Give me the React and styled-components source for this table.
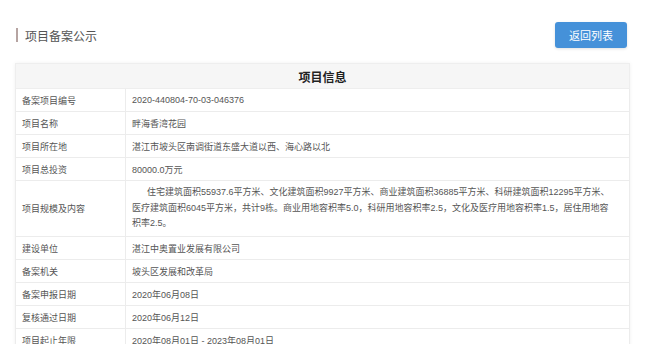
import styled, { createGlobalStyle } from "styled-components";

const GlobalStyle = createGlobalStyle`
  html, body {
    margin: 0;
    padding: 0;
    background: #fff;
  }
  body {
    font-family: "Liberation Sans", "Noto Sans CJK SC", sans-serif;
    color: #555;
  }
`;

const Page = styled.div`
  width: 651px;
  height: 344px;
  overflow: hidden;
  padding: 22px 21px 0 15px;
  box-sizing: border-box;
`;

const TopBar = styled.div`
  display: flex;
  align-items: center;
  justify-content: space-between;
  height: 26px;
  margin-bottom: 15px;
`;

const Heading = styled.h2`
  margin: 0;
  display: flex;
  align-items: center;
  gap: 7px;
  font-size: 12px;
  font-weight: normal;
  color: #555;

  &::before {
    content: "";
    display: block;
    width: 2px;
    height: 14px;
    margin-left: 1px;
    background: #b6a4a2;
  }
`;

const BackButton = styled.a`
  display: flex;
  align-items: center;
  justify-content: center;
  width: 72px;
  height: 26px;
  margin-right: 3px;
  border-radius: 3px;
  background: #4591d9;
  color: #fff;
  font-size: 11px;
  text-decoration: none;
  box-shadow: 0 1px 3px rgba(0, 0, 0, 0.12);
`;

const Table = styled.table`
  width: 615px;
  border-collapse: collapse;
  table-layout: fixed;
  font-size: 9px;
  box-shadow: 0 0 4px rgba(0, 0, 0, 0.06);
`;

const Col = styled.col`
  width: ${(p) => (p.$w ? `${p.$w}px` : "auto")};
`;

const HeadCell = styled.th`
  height: 24px;
  padding: 0;
  background: #f6f6f6;
  border: 1px solid #eeeeee;
  font-size: 12px;
  font-weight: bold;
  color: #222;
  text-align: center;
`;

const Label = styled.td`
  height: ${(p) => p.$h || 23}px;
  padding: 0 0 0 6px;
  box-sizing: border-box;
  border: 1px solid #ececec;
  color: #555;
  vertical-align: middle;
`;

const Value = styled.td`
  padding: ${(p) => (p.$multi ? "4px 14px 4px 6px" : "0 6px")};
  border: 1px solid #ececec;
  color: #555;
  line-height: ${(p) => (p.$multi ? "15.5px" : "normal")};
  vertical-align: middle;
`;

const Indent = styled.span`
  display: inline-block;
  width: 15px;
`;

const rows = [
  ["备案项目编号", "2020-440804-70-03-046376"],
  ["项目名称", "畔海香湾花园"],
  ["项目所在地", "湛江市坡头区南调街道东盛大道以西、海心路以北"],
  ["项目总投资", "80000.0万元"],
  ["项目规模及内容", null],
  ["建设单位", "湛江中奥置业发展有限公司"],
  ["备案机关", "坡头区发展和改革局"],
  ["备案申报日期", "2020年06月08日"],
  ["复核通过日期", "2020年06月12日"],
  ["项目起止年限", "2020年08月01日 - 2023年08月01日"],
];

function App() {
  return (
    <Page>
      <GlobalStyle />
      <TopBar>
        <Heading>项目备案公示</Heading>
        <BackButton href="#">返回列表</BackButton>
      </TopBar>
      <Table>
        <colgroup>
          <Col $w={110} />
          <Col />
        </colgroup>
        <thead>
          <tr>
            <HeadCell colSpan={2}>项目信息</HeadCell>
          </tr>
        </thead>
        <tbody>
          {rows.map(([label, value]) =>
            value === null ? (
              <tr key={label}>
                <Label $h={56}>{label}</Label>
                <Value $multi>
                  <Indent />
                  住宅建筑面积55937.6平方米、文化建筑面积9927平方米、商业建筑面积36885平方米、科研建筑面积12295平方米、
                  医疗建筑面积6045平方米，共计9栋。商业用地容积率5.0，科研用地容积率2.5，文化及医疗用地容积率1.5，居住用地容积率2.5。
                </Value>
              </tr>
            ) : (
              <tr key={label}>
                <Label>{label}</Label>
                <Value>{value}</Value>
              </tr>
            )
          )}
        </tbody>
      </Table>
    </Page>
  );
}

export default App;
